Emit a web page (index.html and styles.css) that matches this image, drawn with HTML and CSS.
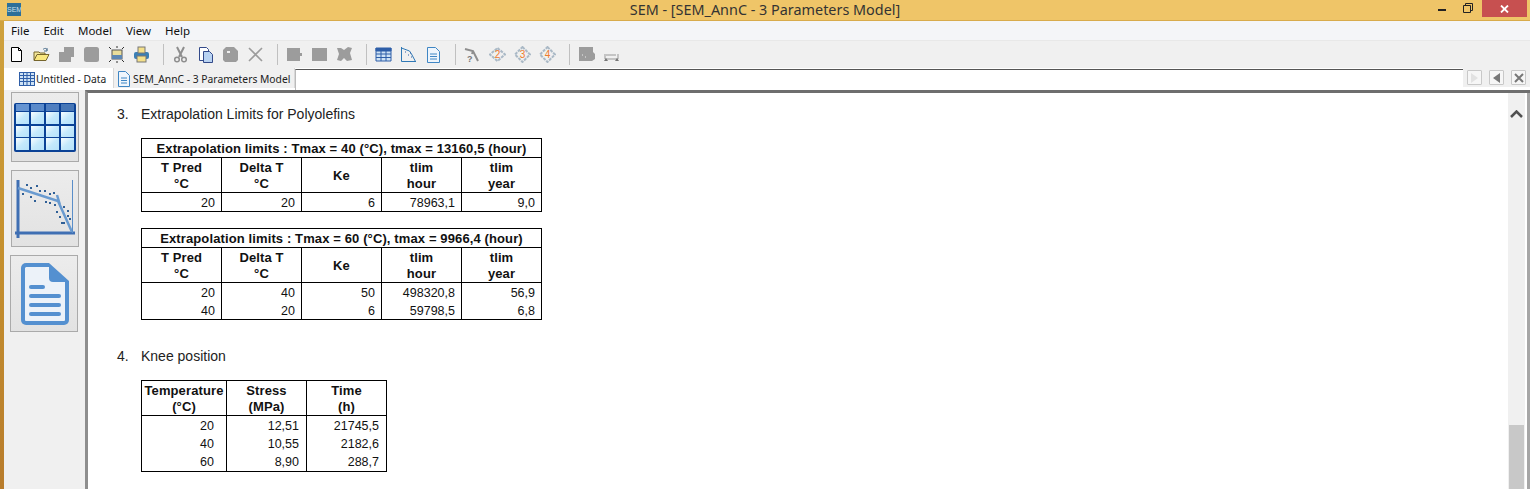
FILE: index.html
```html
<!DOCTYPE html>
<html lang="en">
<head>
<meta charset="utf-8">
<title>SEM</title>
<link rel="stylesheet" href="styles.css">
</head>
<body>
<div class="window">
  <header class="titlebar">
    <div class="title-left"><div class="app-icon">SEM</div></div>
    <div class="title">SEM - [SEM_AnnC - 3 Parameters Model]</div>
    <div class="win-controls">
      <svg class="win-min" width="8" height="3" viewBox="0 0 8 3"><rect width="8" height="2" fill="#222"/></svg>
      <svg class="win-max" width="10" height="10" viewBox="0 0 10 10"><path d="M2.5 2.5V.5h7v7h-2M.5 2.5h7v7h-7z" fill="none" stroke="#222"/></svg>
      <div class="win-close"><svg width="9" height="8" viewBox="0 0 9 8"><path d="M1 .5l7 7M8 .5l-7 7" stroke="#fff" stroke-width="1.8"/></svg></div>
    </div>
  </header>

  <div class="frame">
  <nav class="menubar">
    <span>File</span><span>Edit</span><span>Model</span><span>View</span><span>Help</span>
  </nav>

  <div class="toolbar">
    <svg class="ti" viewBox="0 0 17 17"><path d="M3.5 1.500h7l3 3v11h-10z" fill="#fff" stroke="#000"/><path d="M10.500 1.500v3h3" fill="none" stroke="#000"/></svg>
    <svg class="ti" viewBox="0 0 17 17"><path d="M1 14V6h5l1 1h5v2" fill="#f5e89a" stroke="#76652c"/><path d="M1 14.500l3-6h12l-3 6z" fill="#f9e77f" stroke="#76652c"/><path d="M10 3.500c2-2 4-1 4 1M14 2v3h-3" fill="none" stroke="#4d6f8c"/></svg>
    <svg class="ti" viewBox="0 0 17 17"><path d="M6 1h10v10h-3v5H1V6h5z" fill="#9c9c9c"/></svg>
    <svg class="ti" viewBox="0 0 17 17"><rect x="1" y="1" width="15" height="15" rx="2.500" fill="#9c9c9c"/></svg>
    <svg class="ti" viewBox="0 0 17 17"><rect x="4" y="4" width="10" height="9" fill="#e9dd9b" stroke="#555"/><rect x="4" y="9" width="10" height="4" fill="#5d87b4"/><path d="M1 1l2 2M16 1l-2 2M1 16l2-2M16 16l-2-2M8 1h2M8 16h2" stroke="#333"/></svg>
    <svg class="ti" viewBox="0 0 17 17"><rect x="1" y="6" width="15" height="7" rx="2" fill="#3a7fb5"/><rect x="5" y="1" width="7" height="6" fill="#f4e08a" stroke="#777"/><rect x="4" y="10" width="9" height="6" fill="#f4e08a" stroke="#777"/></svg>
    <i class="sep"></i>
    <svg class="ti" viewBox="0 0 17 17"><path d="M5 1l5 10M12 1L7 11" stroke="#8e8e8e" stroke-width="2"/><circle cx="5" cy="13.500" r="2.300" fill="none" stroke="#8e8e8e" stroke-width="1.500"/><circle cx="12" cy="13.500" r="2.300" fill="none" stroke="#8e8e8e" stroke-width="1.500"/></svg>
    <svg class="ti" viewBox="0 0 17 17"><path d="M2.500 1.500h7l2 2v11h-9z" fill="#fff" stroke="#334a8a"/><path d="M6.500 5.500h6l3 3v8h-9z" fill="#b9d3f2" stroke="#334a8a"/></svg>
    <svg class="ti" viewBox="0 0 17 17"><path d="M4 1h8l4 4v9l-2 2H3l-2-2V4z" fill="#9c9c9c"/><rect x="5" y="5" width="3" height="2" fill="#eee"/></svg>
    <svg class="ti" viewBox="0 0 17 17"><path d="M2 2l13 13M15 2L2 15" stroke="#9c9c9c" stroke-width="1.600"/></svg>
    <i class="sep"></i>
    <svg class="ti" viewBox="0 0 17 17"><path d="M1 2h13v5h2v3h-2v5H1z" fill="#9c9c9c"/></svg>
    <svg class="ti" viewBox="0 0 17 17"><rect x="1" y="2" width="15" height="13" fill="#9c9c9c"/></svg>
    <svg class="ti" viewBox="0 0 17 17"><path d="M1 2h4l3 2 4-3 4 1-2 5 2 7-5 1-3-3-3 3-4-1 2-6z" fill="#9c9c9c"/></svg>
    <i class="sep"></i>
    <svg class="ti" viewBox="0 0 17 17"><rect x="1" y="2" width="15" height="13" fill="#cfe3f5"/><path d="M1 2h15v3H1zM1 8h15M1 11.500h15M1 15h15M1 2v13M6 2v13M11 2v13M16 2v13" fill="#2f5fa8" stroke="#2f5fa8"/></svg>
    <svg class="ti" viewBox="0 0 17 17"><path d="M1.500 1v14.500H16" fill="none" stroke="#2f78b5"/><path d="M1.500 2l8 3 2 3 4 7.500" fill="none" stroke="#2f78b5"/><path d="M5 6h1M8 9h1M10 7h1M11 11h1" stroke="#2f5fa8"/></svg>
    <svg class="ti" viewBox="0 0 17 17"><path d="M2.500 1.500h8l4 4v11h-12z" fill="#eef5fc" stroke="#3f86c4"/><path d="M5 8h7M5 10.500h7M5 13h7" stroke="#3f86c4"/></svg>
    <i class="sep"></i>
    <svg class="ti" viewBox="0 0 17 17"><path d="M1 3l8 2 5 10M9 5l-1 3" fill="none" stroke="#8e8e8e" stroke-width="2"/><text x="3" y="16" class="glyph-q">?</text></svg>
    <svg class="ti" viewBox="0 0 17 17"><path d="M8.500 2L16 8.500 8.500 15 1 8.500z" fill="none" stroke="#aab9c6" stroke-width="2" stroke-dasharray="3 1"/><text x="8.500" y="12" class="glyph-n">2</text></svg>
    <svg class="ti" viewBox="0 0 17 17"><path d="M8.500 1L16 8.500 8.500 16 1 8.500z" fill="none" stroke="#aab9c6" stroke-width="2" stroke-dasharray="3 1"/><text x="8.500" y="12" class="glyph-n">3</text></svg>
    <svg class="ti" viewBox="0 0 17 17"><path d="M8.500 1L16 8.500 8.500 16 1 8.500z" fill="none" stroke="#aab9c6" stroke-width="2" stroke-dasharray="3 1"/><text x="8.500" y="12" class="glyph-n">4</text></svg>
    <i class="sep"></i>
    <svg class="ti" viewBox="0 0 17 17"><path d="M1 1h14v5l2 2v5l-3 2H1z" fill="#9c9c9c"/><path d="M4 9h1M7 11h1" stroke="#eee"/></svg>
    <svg class="ti" viewBox="0 0 17 17"><path d="M2 8v5h13V8M4 8v2M6 8v2M8 8v2M10 8v2M12 8v2" fill="none" stroke="#999"/><path d="M1 15l2-3 2 3zM12 15l2-3 2 3z" fill="#777"/></svg>
  </div>

  <div class="tabstrip">
    <div class="tab tab-active">
      <svg class="tab-ico" width="16" height="14" viewBox="0 0 16 14"><rect x=".5" y=".5" width="15" height="13" fill="#cfe3f5" stroke="#2f5fa8"/><path d="M0 3.500h16M0 6.500h16M0 9.500h16M4.500 0v14M8 0v14M11.500 0v14" stroke="#2f5fa8"/></svg>
      <span>Untitled - Data</span>
    </div>
    <div class="tab tab-other">
      <svg class="tab-ico" width="12" height="16" viewBox="0 0 12 16"><path d="M.5.500h7l4 4v11H.5z" fill="#eef5fc" stroke="#3f86c4"/><path d="M3 7h6M3 9.500h6M3 12h6" stroke="#3f86c4"/></svg>
      <span>SEM_AnnC - 3 Parameters Model</span>
    </div>
    <div class="tab-blank"></div>
    <div class="tab-nav">
      <button class="nav-btn"><svg width="9" height="10" viewBox="0 0 9 10"><path d="M1 0l7 5-7 5z" fill="#e2e2e2"/></svg></button>
      <button class="nav-btn"><svg width="9" height="10" viewBox="0 0 9 10"><path d="M8 0v10L1 5z" fill="#777"/></svg></button>
      <button class="nav-btn"><svg width="10" height="10" viewBox="0 0 10 10"><path d="M1 1l8 8M9 1l-8 8" stroke="#777" stroke-width="2"/></svg></button>
    </div>
  </div>

  <div class="workspace">
    <aside class="sidebar">
      <button class="side-btn side-a">
        <svg width="62" height="49" viewBox="0 0 62 49"><defs><linearGradient id="cell" x1="0" y1="0" x2="1" y2="1"><stop offset="0" stop-color="#fbfeff"/><stop offset=".5" stop-color="#c4e9fc"/><stop offset="1" stop-color="#b6e2fa"/></linearGradient></defs><rect width="62" height="49" rx="2" fill="#0b4296"/><rect x="2" y="1" width="13" height="7" fill="#6594d2"/><rect x="17" y="1" width="13" height="7" fill="#5a8aca"/><rect x="32" y="1" width="13" height="7" fill="#507fc0"/><rect x="47" y="1" width="13" height="7" fill="#4676b6"/><g fill="url(#cell)"><rect x="2" y="9" width="13" height="12"/><rect x="17" y="9" width="13" height="12"/><rect x="32" y="9" width="13" height="12"/><rect x="47" y="9" width="13" height="12"/><rect x="2" y="23" width="13" height="11"/><rect x="17" y="23" width="13" height="11"/><rect x="32" y="23" width="13" height="11"/><rect x="47" y="23" width="13" height="11"/><rect x="2" y="35" width="13" height="12"/><rect x="17" y="35" width="13" height="12"/><rect x="32" y="35" width="13" height="12"/><rect x="47" y="35" width="13" height="12"/></g></svg>
      </button>
      <button class="side-btn side-b">
        <svg width="62" height="58" viewBox="0 0 62 58"><path d="M4 0v58M1 53h60" stroke="#3f6fb3" stroke-width="3" fill="none"/><path d="M4 8l40 13 14 31M43 15l3 10" stroke="#6a9bd0" stroke-width="2.500" fill="none"/><path d="M58.500 0v53" stroke="#5a8ec9"/><g fill="#2f5f96"><rect x="12" y="4" width="2" height="2"/><rect x="16" y="7" width="2" height="2"/><rect x="22" y="5" width="2" height="2"/><rect x="25" y="10" width="2" height="2"/><rect x="30" y="10" width="2" height="2"/><rect x="35" y="13" width="2" height="2"/><rect x="39" y="12" width="2" height="2"/><rect x="8" y="13" width="2" height="2"/><rect x="16" y="16" width="2" height="2"/><rect x="20" y="20" width="2" height="2"/><rect x="31" y="21" width="2" height="2"/><rect x="35" y="22" width="2" height="2"/><rect x="40" y="24" width="2" height="2"/><rect x="49" y="26" width="2" height="2"/><rect x="42" y="31" width="2" height="2"/><rect x="53" y="30" width="2" height="2"/><rect x="45" y="36" width="2" height="2"/><rect x="53" y="35" width="2" height="2"/><rect x="49" y="42" width="2" height="2"/><rect x="55" y="38" width="2" height="2"/><rect x="47" y="42" width="2" height="2"/></g></svg>
      </button>
      <button class="side-btn side-c">
        <svg width="50" height="64" viewBox="0 0 50 64"><path d="M6 1h23l20 18v39a5 5 0 0 1-5 5H6a5 5 0 0 1-5-5V6a5 5 0 0 1 5-5z" fill="#5490d0"/><path d="M6 5h23v11a4 4 0 0 0 4 4h12v38a1 1 0 0 1-1 1H6a1 1 0 0 1-1-1V6z" fill="#ecf2f9"/><g fill="#5490d0"><rect x="9" y="23" width="16" height="4" rx="2"/><rect x="9" y="32" width="32" height="4" rx="2"/><rect x="9" y="41" width="32" height="4" rx="2"/><rect x="9" y="50" width="32" height="4" rx="2"/></g></svg>
      </button>
    </aside>

    <main class="doc">
      <div class="doc-content">
        <div class="heading"><span class="num">3.</span>Extrapolation Limits for Polyolefins</div>
        <table class="t t-five t-first">
          <tr class="r-cap"><th colspan="5">Extrapolation limits : Tmax = 40 (°C), tmax = 13160,5 (hour)</th></tr>
          <tr class="r-head"><th>T Pred<br>°C</th><th>Delta T<br>°C</th><th>Ke</th><th>tlim<br>hour</th><th>tlim<br>year</th></tr>
          <tr class="r-last"><td>20</td><td>20</td><td>6</td><td>78963,1</td><td>9,0</td></tr>
        </table>
        <table class="t t-five t-second">
          <tr class="r-cap"><th colspan="5">Extrapolation limits : Tmax = 60 (°C), tmax = 9966,4 (hour)</th></tr>
          <tr class="r-head"><th>T Pred<br>°C</th><th>Delta T<br>°C</th><th>Ke</th><th>tlim<br>hour</th><th>tlim<br>year</th></tr>
          <tr><td>20</td><td>40</td><td>50</td><td>498320,8</td><td>56,9</td></tr>
          <tr class="r-last"><td>40</td><td>20</td><td>6</td><td>59798,5</td><td>6,8</td></tr>
        </table>
        <div class="heading heading-knee"><span class="num">4.</span>Knee position</div>
        <table class="t t-three">
          <tr class="r-head"><th>Temperature<br>(°C)</th><th>Stress<br>(MPa)</th><th>Time<br>(h)</th></tr>
          <tr><td>20</td><td>12,51</td><td>21745,5</td></tr>
          <tr><td>40</td><td>10,55</td><td>2182,6</td></tr>
          <tr class="r-last"><td>60</td><td>8,90</td><td>288,7</td></tr>
        </table>
      </div>
      <div class="scrollbar">
        <svg class="sb-up" width="13" height="8" viewBox="0 0 13 8"><path d="M1 7l5.500-5.500L12 7" fill="none" stroke="#505050" stroke-width="2.500"/></svg>
        <div class="sb-thumb"></div>
      </div>
      <div class="doc-edge"></div>
    </main>
  </div>
  </div>
</div>
</body>
</html>
```

FILE: styles.css
```css
* { box-sizing: border-box; }
html, body { margin: 0; padding: 0; height: 100%; overflow: hidden; background: #fff; }
.window { width: 1530px; height: 489px; display: flex; flex-direction: column; overflow: hidden; font-family: "Noto Sans", sans-serif; color: #111; }

.titlebar { height: 21px; flex: none; display: grid; grid-template-columns: 1fr auto 1fr; align-items: start; background: #efc568; border-bottom: 1px solid #d8ab4c; }
.app-icon { width: 14px; height: 13px; margin: 3px 0 0 7px; background: #2d6f99; color: #cfe0ea; font: 7px/13px "Liberation Sans", sans-serif; text-align: center; overflow: hidden; }
.title { font-size: 14.4px; line-height: 20px; color: #333; white-space: nowrap; }
.win-controls { display: flex; align-items: flex-start; justify-content: flex-end; }
.win-min { margin: 9px 17px 0 0; }
.win-max { margin: 3px 9px 0 0; }
.win-close { width: 45px; height: 17px; margin-right: 3px; background: #c75050; display: flex; align-items: center; justify-content: center; }

.frame { flex: 1; min-height: 0; display: flex; flex-direction: column; border-left: 4px solid #c2912f; border-image: linear-gradient(#cfa23f, #c6922f 45%, #b87c2c) 1; }

.menubar { height: 19px; flex: none; display: flex; gap: 14px; padding-left: 7px; background: #f4f5f8; font-size: 11.5px; line-height: 20px; color: #111; }

.toolbar { height: 28px; flex: none; display: flex; align-items: center; gap: 8px; padding: 0 0 0 4px; background: #f0f0f0; border-top: 1px solid #e8e8e8; }
.ti { width: 17px; height: 17px; flex: none; }
.sep { width: 1px; height: 21px; background: #c0c0c0; margin: 0 0 0 5px; flex: none; }
.glyph-q { font: bold 9px "Liberation Sans", sans-serif; fill: #777; }
.glyph-n { font: 10px "Liberation Sans", sans-serif; fill: #ef7a2b; text-anchor: middle; }

.tabstrip { height: 22px; flex: none; display: flex; align-items: flex-start; background: #fff; font-size: 10.3px; }
.tab { display: flex; align-items: center; white-space: nowrap; height: 20px; padding-top: 2px; color: #222; }
.tab-ico { flex: none; }
.tab-active { width: 109px; padding-left: 15px; gap: 1px; }
.tab-other { width: 182px; padding-left: 4px; gap: 3px; background: #f0f0f0; border-left: 1px solid #d8d8d8; border-right: 1px solid #d8d8d8; }
.tab-blank { width: 1168px; height: 21px; margin-top: 1px; background: #fff; border-top: 1px solid #555; border-left: 1px solid #bbb; }
.tab-nav { flex: 1; height: 19px; display: flex; gap: 7px; padding: 2px 0 0 4px; background: #f0f0f0; }
.nav-btn { width: 15px; height: 15px; padding: 0; background: #f6f6f6; border: 1px solid #c8c8c8; border-radius: 1px; display: flex; align-items: center; justify-content: center; }

.workspace { flex: 1; min-height: 0; display: flex; }
.sidebar { width: 81px; flex: none; padding: 2px 0 0 6px; background: #f0f0f0; display: flex; flex-direction: column; gap: 8px; }
.side-btn { padding: 0; margin: 0; width: 68px; background: linear-gradient(#ececec, #e2e2e2); border: 1px solid #aaa; display: flex; align-items: center; justify-content: center; flex: none; }
.side-a { height: 70px; margin-left: 1px; }
.side-b { height: 77px; margin-left: 1px; }
.side-c { height: 77px; padding-left: 2px; }

.doc { flex: 1; min-width: 0; display: flex; border-left: 3px solid #8e8e8e; border-top: 3px solid #6e6e6e; background: #fff; }
.doc-content { flex: 1; min-width: 0; padding: 12px 0 0 29px; font-family: "Liberation Sans", sans-serif; font-size: 12.5px; }
.heading { font-size: 14px; line-height: 18px; color: #222; }
.num { display: inline-block; width: 24px; }
.heading-knee { margin-top: 27px; }
.t { border-collapse: collapse; table-layout: fixed; margin: 15px 0 0 24px; border: 1px solid #000; font-size: 12.5px; color: #111; }
.t th, .t td { border-left: 1px solid #000; border-right: 1px solid #000; padding: 2px 6px 0; line-height: 16px; white-space: nowrap; overflow: hidden; }
.t th { text-align: center; font-weight: bold; font-size: 13px; letter-spacing: .12px; }
.t td { text-align: right; height: 18px; }
.t tr:last-child td { height: 19px; }
.t-second tr:last-child td { height: 18px; }
.r-cap th { height: 19px; border-bottom: 1px solid #000; }
.r-head th { height: 35px; border-bottom: 1px solid #000; }
.t-five { width: 401px; }
.t-five th, .t-five td { width: 80px; }
.t-second { margin-top: 16px; }
.t-three { width: 245px; margin-top: 15px; }
.t-three th, .t-three td { width: 80px; }
.t-three td { padding-right: 7px; }
.t-three tr > :first-child { width: 85px; padding-left: 1px; padding-right: 1px; }
.t-three td:first-child { padding-right: 12px; }

.scrollbar { width: 17px; flex: none; margin-right: 2px; background: #f0f0f0; display: flex; flex-direction: column; align-items: center; }
.sb-up { margin-top: 17px; }
.sb-thumb { width: 15px; height: 64px; margin-top: auto; background: #c8c8c8; flex: none; }
.doc-edge { width: 3px; flex: none; background: #a6a6a6; }
```
